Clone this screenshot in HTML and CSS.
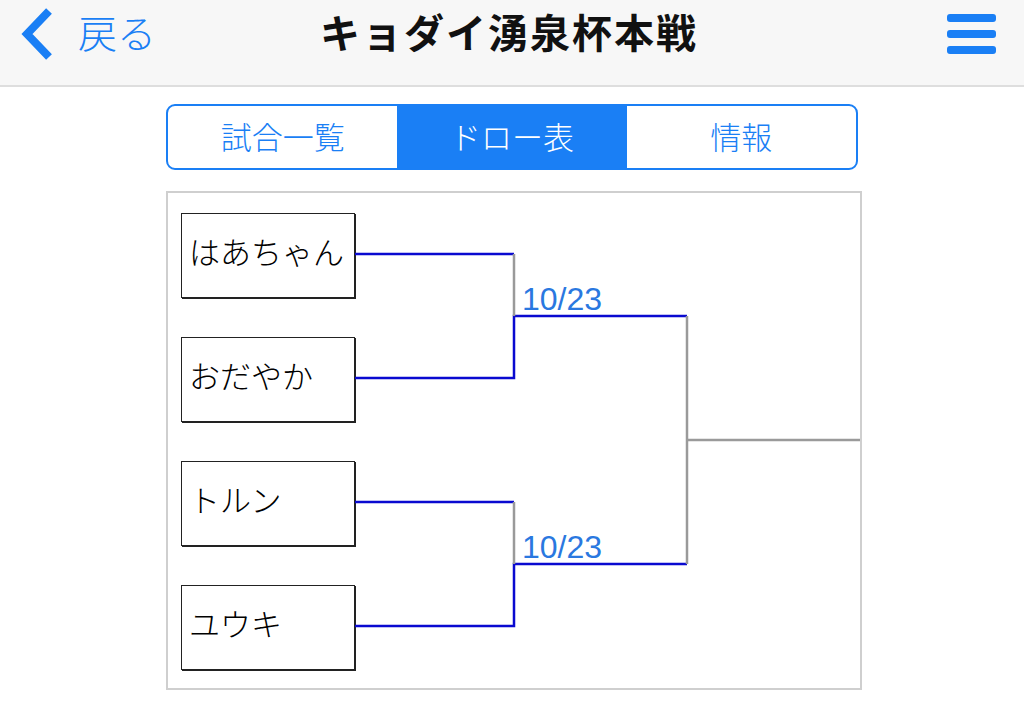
FILE: index.html
```html
<!DOCTYPE html>
<html lang="ja">
<head>
<meta charset="utf-8">
<title>キョダイ湧泉杯本戦</title>
<link rel="stylesheet" href="styles.css">
</head>
<body>
<header class="nav">
  <a class="back">
    <svg class="chev" width="34" height="56" viewBox="0 0 34 56"><polyline points="31,4 9,27 31,50" fill="none" stroke="#1a7ff5" stroke-width="8" stroke-linejoin="miter" stroke-linecap="butt"/></svg>
    <span class="back-text">戻る</span>
  </a>
  <h1 class="title">キョダイ湧泉杯本戦</h1>
  <div class="menu">
    <span class="bar"></span><span class="bar"></span><span class="bar"></span>
  </div>
</header>

<nav class="seg">
  <div class="seg-item">試合一覧</div>
  <div class="seg-item active">ドロー表</div>
  <div class="seg-item">情報</div>
</nav>

<section class="bracket">
  <div class="players">
    <div class="player">はあちゃん</div>
    <div class="player">おだやか</div>
    <div class="player">トルン</div>
    <div class="player">ユウキ</div>
  </div>
  <svg class="lines" width="692" height="495" viewBox="0 0 692 495">
    <g fill="none" stroke-width="2.5">
      <path d="M187 61 H346" stroke="#0a0ad0"/>
      <path d="M187 185 H346 V123 H519" stroke="#0a0ad0"/>
      <path d="M346 61 V123" stroke="#9a9a9a"/>
      <path d="M187 309 H346" stroke="#0a0ad0"/>
      <path d="M187 433 H346 V371 H519" stroke="#0a0ad0"/>
      <path d="M346 309 V371" stroke="#9a9a9a"/>
      <path d="M519 123 V371 M519 247 H694" stroke="#9a9a9a"/>
    </g>
  </svg>
  <span class="date d1">10/23</span>
  <span class="date d2">10/23</span>
</section>
</body>
</html>
```
FILE: styles.css
```css
* { box-sizing: border-box; }
body {
  margin: 0;
  background: #fff;
  font-family: "Noto Sans CJK JP", "Noto Sans", sans-serif;
  color: #222;
}
.nav {
  height: 87px;
  background: #f7f7f7;
  border-bottom: 2px solid #dedede;
  display: grid;
  grid-template-columns: 1fr auto 1fr;
  align-items: center;
  padding: 0 28px 0 18px;
}
.back {
  display: flex;
  align-items: center;
  gap: 26px;
  color: #1a7ff5;
  margin-top: -16px;
}
.chev { display: block; }
.back-text {
  font-size: 39px;
  line-height: 1;
  font-weight: 300;
  margin-top: -6px;
}
.title {
  margin: -24px 0 0 4px;
  font-size: 40px;
  font-weight: 700;
  letter-spacing: 2px;
  color: #111;
  line-height: 1;
}
.menu {
  justify-self: end;
  display: flex;
  flex-direction: column;
  gap: 8px;
  margin-top: -18px;
}
.bar {
  display: block;
  width: 49px;
  height: 8px;
  border-radius: 3px;
  background: #1a7ff5;
}
.seg {
  width: 692px;
  height: 66px;
  margin: 17px auto 0;
  border: 2px solid #1a7ff5;
  border-radius: 9px;
  overflow: hidden;
  display: grid;
  grid-template-columns: 1fr 1fr 1fr;
}
.seg-item {
  display: flex;
  align-items: center;
  justify-content: center;
  font-size: 31px;
  color: #1a7ff5;
  font-weight: 300;
  padding-bottom: 4px;
}
.seg-item.active {
  background: #1a7ff5;
  color: #fff;
}
.bracket {
  position: relative;
  width: 696px;
  height: 499px;
  margin: 21px 0 0 166px;
  border: 2px solid #cfcfcf;
  padding: 20px 0 0 13px;
}
.players {
  display: flex;
  flex-direction: column;
  gap: 39px;
  width: 174px;
}
.player {
  height: 85px;
  border: 1.5px solid #222;
  box-shadow: 1px 1px 0 #222;
  display: flex;
  align-items: center;
  padding: 0 0 10px 7px;
  font-size: 31px;
  font-weight: 300;
  color: #000;
  white-space: nowrap;
  background: #fff;
}
.lines {
  position: absolute;
  left: 0;
  top: 0;
}
.date {
  position: absolute;
  left: 354px;
  font-family: "Liberation Sans", Arial, sans-serif;
  font-size: 32px;
  line-height: 1;
  color: #2a78e0;
}
.d1 { top: 90px; }
.d2 { top: 338px; }
```
